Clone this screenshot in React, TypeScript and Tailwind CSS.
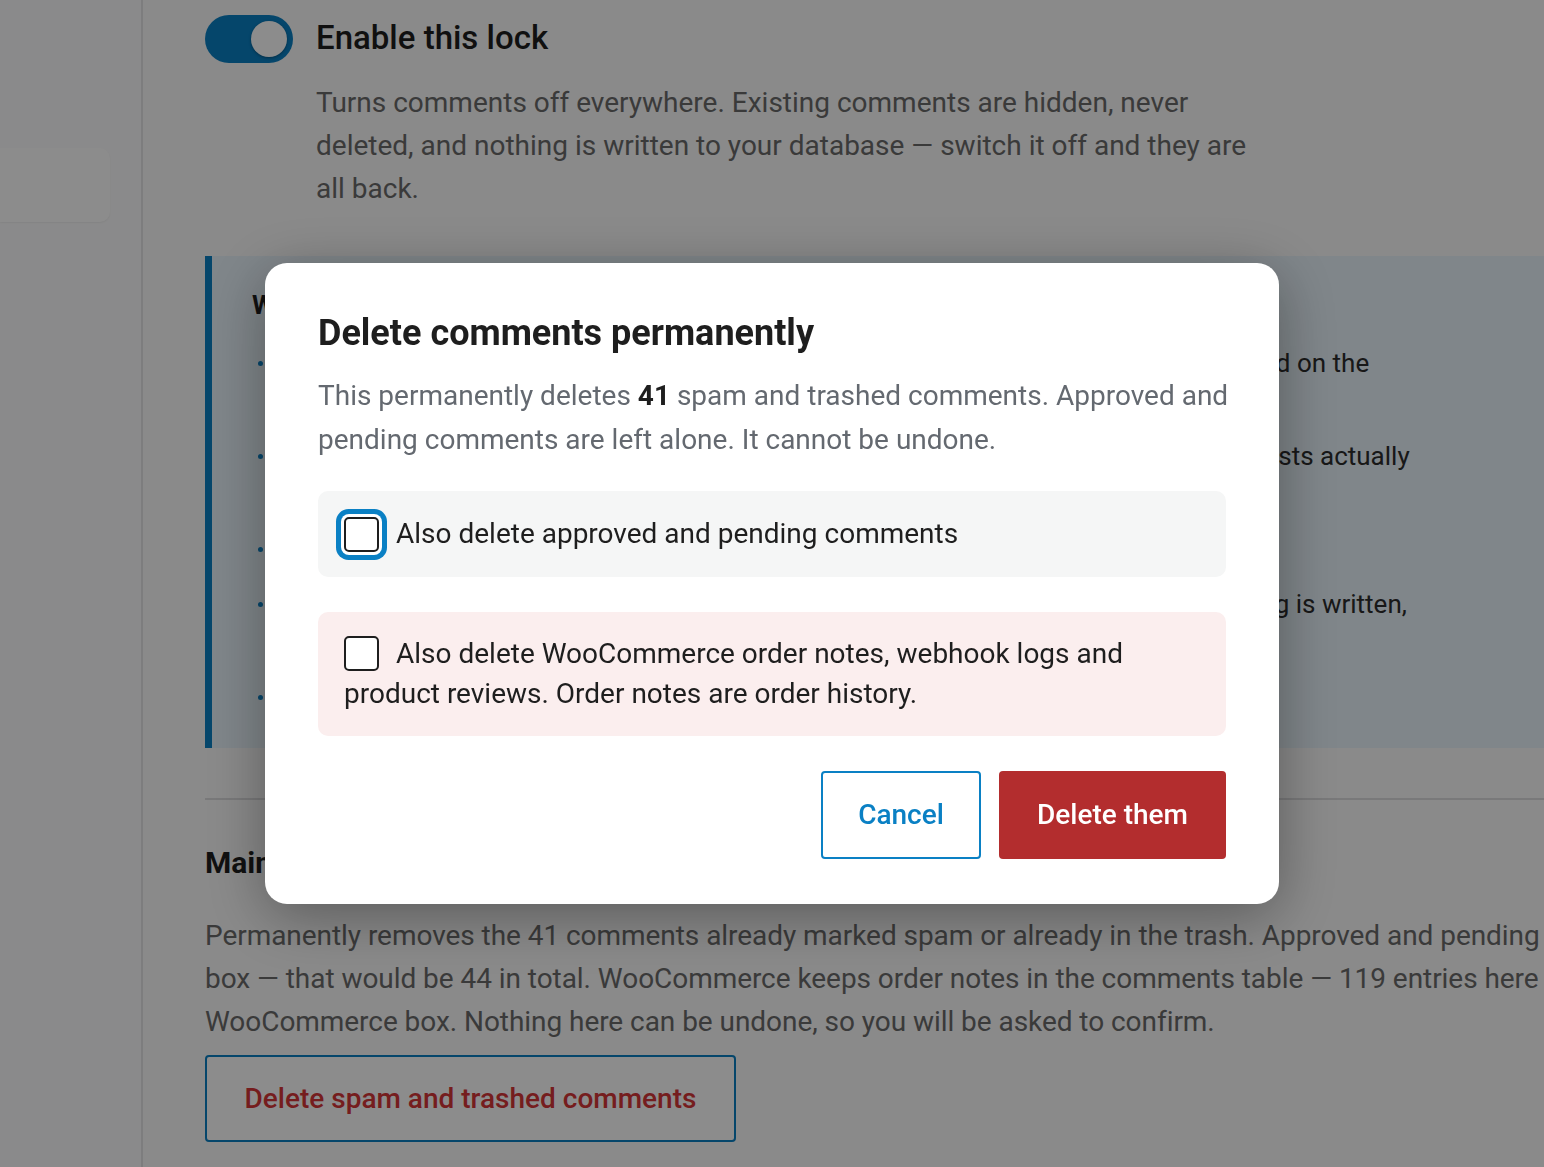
import { useState } from 'react';

const font = { fontFamily: 'Roboto, "Noto Sans", Arial, sans-serif' };

function Toggle() {
  return (
    <div className="relative h-[48px] w-[88px] flex-shrink-0 rounded-full bg-[#0a80c4]">
      <span className="absolute right-[6px] top-[6px] h-[36px] w-[36px] rounded-full bg-white shadow-[0_1px_3px_rgba(0,0,0,0.35)]" />
    </div>
  );
}

function Bullet({ lines }: { lines: string[] }) {
  return (
    <li className="flex items-start">
      <span className="mt-[17px] mr-[19px] h-[5px] w-[5px] flex-shrink-0 rounded-full bg-[#0a80c4]" />
      <span className="whitespace-nowrap leading-[38px]">
        {lines.map((l, i) => (
          <span key={i} className="block">{l}</span>
        ))}
      </span>
    </li>
  );
}

function Checkbox({ focused }: { focused?: boolean }) {
  return (
    <span
      className={`inline-block h-[35px] w-[35px] flex-shrink-0 rounded-[5px] border-2 border-[#1e1e1e] bg-white align-middle ${
        focused ? 'ring-[5px] ring-[#0a80c4] ring-offset-[3px] ring-offset-white' : ''
      }`}
    />
  );
}

export default function App() {
  const [approved, setApproved] = useState(false);
  const [woo, setWoo] = useState(false);

  return (
    <div className="relative h-[1167px] w-full overflow-hidden bg-[#fbfbfb] text-[#1e1e1e]" style={font}>
      <div className="flex h-full">
        {/* sidebar */}
        <aside className="w-[143px] flex-shrink-0 border-r-2 border-[#e4e4e6] bg-[#fcfcfd] pt-[148px]">
          <div className="h-[74px] w-[110px] rounded-r-[10px] bg-white shadow-[0_1px_2px_rgba(0,0,0,0.06)]" />
        </aside>

        {/* main settings */}
        <main className="w-[1500px] flex-shrink-0 pl-[62px] pt-[15px]">
          <div className="flex items-start gap-[23px]">
            <Toggle />
            <h2 className="mt-[1px] text-[33px] font-medium leading-[44px] text-[#1e1e1e]">Enable this lock</h2>
          </div>
          <p className="mt-[18px] whitespace-nowrap pl-[111px] text-[28px] leading-[43px] text-[#6b6b6b]">
            Turns comments off everywhere. Existing comments are hidden, never
            <br />
            deleted, and nothing is written to your database — switch it off and they are
            <br />
            all back.
          </p>

          <div className="mt-[46px] border-l-[7px] border-[#0a80c4] bg-[#e9f4fb] pb-[32px] pl-[40px] pt-[27px] text-[26px] text-[#2c2c2c]">
            <h3 className="font-bold leading-[44px] text-[#1e1e1e]">What changes while the lock is on</h3>
            <ul className="mt-[17px] space-y-[17px] pl-[6px]">
              <Bullet
                lines={[
                  'Comment forms are removed everywhere, and comment counts are no longer displayed on the',
                  'front end or in feeds.',
                ]}
              />
              <Bullet
                lines={[
                  'Pingbacks and trackbacks are rejected at the door, so not one of those incoming requests actually',
                  'touches your database.',
                ]}
              />
              <Bullet lines={['The Comments menu and dashboard widgets are hidden.']} />
              <Bullet
                lines={[
                  'All existing comments stay in your database fully untouched. Nothing is moved, nothing is written,',
                  'and nothing is deleted.',
                ]}
              />
              <Bullet lines={['Switching the lock off restores everything exactly as it was.']} />
            </ul>
          </div>

          <hr className="mt-[50px] border-t-2 border-[#dcdcde]" />

          <h3 className="mt-[43px] text-[30px] font-bold leading-[40px] text-[#1e1e1e]">Maintenance</h3>
          <p className="mt-[31px] whitespace-nowrap text-[28px] leading-[43px] tracking-[-0.05px] text-[#6b6b6b]">
            Permanently removes the 41 comments already marked spam or already in the trash. Approved and pending comments stay unless you tick the
            <br />
            box — that would be 44 in total. WooCommerce keeps order notes in the comments table — 119 entries here — and they stay unless you tick the
            <br />
            WooCommerce box. Nothing here can be undone, so you will be asked to confirm.
          </p>
          <button className="mt-[12px] h-[87px] w-[531px] rounded-[4px] border-2 border-[#0a80c4] bg-white text-[28px] font-medium text-[#d63638]">
            Delete spam and trashed comments
          </button>
        </main>
      </div>

      {/* modal */}
      <div className="fixed inset-0 flex items-center justify-center bg-black/[0.45]">
        <div className="w-[1014px] rounded-[22px] bg-white px-[53px] pb-[45px] pt-[48px] shadow-[0_12px_60px_rgba(0,0,0,0.35)]">
          <h2 className="text-[36px] font-bold leading-[44px] text-[#1e1e1e]">Delete comments permanently</h2>
          <p className="mt-[19px] whitespace-nowrap text-[28px] leading-[44px] text-[#646970]">
            This permanently deletes <strong className="font-bold text-[#1e1e1e]">41</strong> spam and trashed comments. Approved and
            <br />
            pending comments are left alone. It cannot be undone.
          </p>

          <label
            className="mt-[29px] flex h-[86px] cursor-pointer items-center rounded-[10px] bg-[#f5f6f6] px-[26px] text-[28px] text-[#1e1e1e]"
            onClick={() => setApproved(!approved)}
          >
            <Checkbox focused />
            <span className="ml-[17px]">Also delete approved and pending comments</span>
          </label>

          <label
            className="mt-[35px] block cursor-pointer rounded-[10px] bg-[#fbeeee] px-[26px] pb-[22px] pt-[20px] text-[28px] leading-[40px] text-[#1e1e1e]"
            onClick={() => setWoo(!woo)}
          >
            <Checkbox />
            <span className="ml-[17px] align-middle">Also delete WooCommerce order notes, webhook logs and</span>
            <br />
            product reviews. Order notes are order history.
          </label>

          <div className="mt-[35px] flex justify-end gap-[18px]">
            <button className="h-[88px] w-[160px] rounded-[4px] border-2 border-[#0a80c4] bg-white text-[28px] font-medium text-[#0a80c4]">
              Cancel
            </button>
            <button className="h-[88px] w-[227px] rounded-[4px] bg-[#b32d2e] text-[28px] font-medium text-white">
              Delete them
            </button>
          </div>
        </div>
      </div>
    </div>
  );
}
